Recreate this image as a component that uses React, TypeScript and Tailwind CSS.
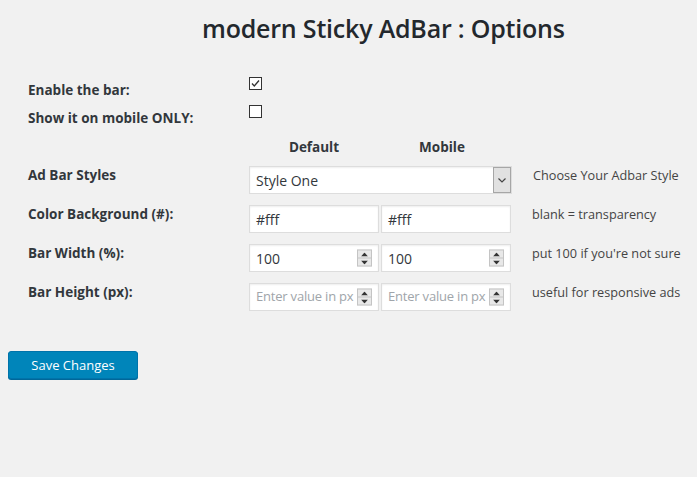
import React from "react";

const font = { fontFamily: '"Open Sans", "Noto Sans", Arial, sans-serif' };

function Spinner() {
  return (
    <div className="absolute right-[6px] top-1/2 -translate-y-1/2 w-[15px] h-[17px] border border-[#c4c4c4] bg-[#e8e8e8] flex flex-col">
      <div className="flex-1 flex items-center justify-center border-b border-[#c4c4c4]">
        <svg width="7" height="4" viewBox="0 0 7 4"><path d="M3.5 0L7 4H0z" fill="#333" /></svg>
      </div>
      <div className="flex-1 flex items-center justify-center">
        <svg width="7" height="4" viewBox="0 0 7 4"><path d="M0 0h7L3.5 4z" fill="#333" /></svg>
      </div>
    </div>
  );
}

function Input({ value, placeholder, spin }: { value?: string; placeholder?: string; spin?: boolean }) {
  return (
    <div className="relative w-[130px] h-[28px] border border-[#ddd] bg-white shadow-[inset_0_1px_2px_rgba(0,0,0,0.07)] flex items-center pl-[6px] text-[14px] overflow-hidden whitespace-nowrap">
      {value ? (
        <span className="text-[#32373c]">{value}</span>
      ) : (
        <span className="text-[#a0a5aa] text-[13px] tracking-[-0.2px]">{placeholder}</span>
      )}
      {spin && <Spinner />}
    </div>
  );
}

function Checkbox({ checked }: { checked?: boolean }) {
  return (
    <div className="w-[13px] h-[13px] border border-[#333] bg-white flex items-center justify-center">
      {checked && (
        <svg width="11" height="11" viewBox="0 0 11 11">
          <path d="M2 5.5L4.3 8 9 2.5" fill="none" stroke="#333" strokeWidth="1.3" />
        </svg>
      )}
    </div>
  );
}

const label = "w-[221px] text-[13.5px] font-bold text-[#32373c]";
const desc = "ml-[21px] text-[12.7px] leading-[18px] text-[#444]";

export default function App() {
  return (
    <div className="w-full min-h-[477px] bg-[#f1f1f1] text-[#23282d]" style={font}>
      <div className="pt-[11px] h-[70px]">
        <h1 className="ml-[202px] text-[25px] leading-[34px] font-semibold text-[#23282d] tracking-[-0.2px]">
          modern Sticky AdBar : Options
        </h1>
      </div>

      <div className="pl-[28px]">
        <div className="flex h-[28px]">
          <div className={`${label} pt-[10px] leading-[20px]`}>Enable the bar:</div>
          <div className="pt-[7px]"><Checkbox checked /></div>
        </div>
        <div className="flex h-[28px]">
          <div className={`${label} pt-[10px] leading-[20px]`}>Show it on mobile ONLY:</div>
          <div className="pt-[7px]"><Checkbox /></div>
        </div>
        <div className="flex h-[40px] pt-[11px] text-[13.5px] leading-[20px] font-bold text-[#32373c]">
          <div className="w-[221px]" />
          <div className="w-[130px] text-center">Default</div>
          <div className="w-[2px]" />
          <div className="w-[130px] text-center pr-[8px]">Mobile</div>
        </div>

        <div className="flex flex-col gap-[11px]">
          <div className="flex h-[28px]">
            <div className={`${label} leading-[18px]`}>Ad Bar Styles</div>
            <div className="w-[263px] h-[28px] border border-[#ddd] bg-white shadow-[inset_0_1px_2px_rgba(0,0,0,0.07)] flex items-center justify-between pl-[6px] text-[14px] text-[#32373c]">
              <span>Style One</span>
              <div className="w-[18px] h-[26px] border border-[#a6a6a6] bg-[#e1e1e1] flex items-center justify-center">
                <svg width="8" height="5" viewBox="0 0 8 5"><path d="M0.5 0.5L4 4 7.5 0.5" fill="none" stroke="#444" strokeWidth="1.2" /></svg>
              </div>
            </div>
            <div className={desc}>Choose Your Adbar Style</div>
          </div>

          <div className="flex h-[28px]">
            <div className={`${label} leading-[18px]`}>Color Background (#):</div>
            <div className="flex gap-[2px]">
              <Input value="#fff" />
              <Input value="#fff" />
            </div>
            <div className={desc}>blank = transparency</div>
          </div>

          <div className="flex h-[28px]">
            <div className={`${label} leading-[18px]`}>Bar Width (%):</div>
            <div className="flex gap-[2px]">
              <Input value="100" spin />
              <Input value="100" spin />
            </div>
            <div className={desc}>put 100 if you're not sure</div>
          </div>

          <div className="flex h-[28px]">
            <div className={`${label} leading-[18px]`}>Bar Height (px):</div>
            <div className="flex gap-[2px]">
              <Input placeholder="Enter value in px" spin />
              <Input placeholder="Enter value in px" spin />
            </div>
            <div className={desc}>useful for responsive ads</div>
          </div>
        </div>
      </div>

      <div className="pl-[8px] pt-[40px]">
        <button className="w-[130px] h-[28px] rounded-[3px] border border-[#0073aa] bg-[#0085ba] shadow-[0_1px_0_#006799] text-white text-[13px] leading-[26px] text-center">
          Save Changes
        </button>
      </div>
    </div>
  );
}
